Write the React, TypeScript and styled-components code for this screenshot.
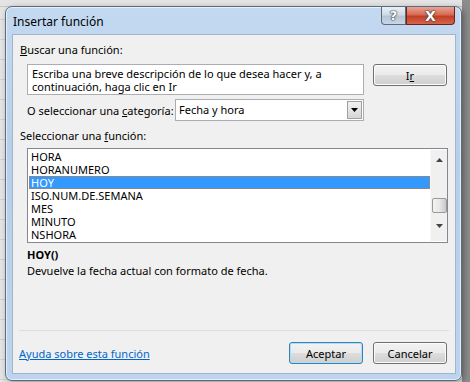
import React from 'react';
import styled, { createGlobalStyle } from 'styled-components';

const GlobalStyle = createGlobalStyle`
  html, body {
    margin: 0;
    padding: 0;
    width: 470px;
    height: 382px;
    overflow: hidden;
  }
  body {
    background:
      linear-gradient(#c9c9c9, #c9c9c9) 0 6px / 100% 1px no-repeat,
      repeating-linear-gradient(#e4e4e4 0, #e4e4e4 19px, #d0d0d0 19px, #d0d0d0 20px);
    font-family: "Noto Sans", "Open Sans", sans-serif;
  }
`;

//Styled Component
const Desktop = styled.div`
  width: 470px;
  height: 382px;
  padding: 6px 8px 0 5px;
  box-sizing: border-box;
  background: linear-gradient(90deg, transparent 0, transparent 462px, #8c8c8c 462px);
`;

const Window = styled.div`
  width: 457px;
  height: 375px;
  box-sizing: border-box;
  border: 1px solid #5b6b7c;
  border-radius: 7px;
  background: linear-gradient(180deg, #c3d9f1 0%, #b6cfea 40%, #bcd4ee 100%);
  box-shadow: inset 0 0 0 1px rgba(255, 255, 255, 0.6), 2px 2px 6px rgba(0, 0, 0, 0.35);
  display: flex;
  flex-direction: column;
  padding: 0 5px 6px 6px;
`;

const TitleBar = styled.div`
  height: 27px;
  display: flex;
  align-items: flex-start;
  justify-content: space-between;
`;

const Title = styled.h1`
  margin: 7px 0 0 1px;
  font-family: "Noto Sans", "Open Sans", sans-serif;
  font-size: 12px;
  font-weight: normal;
  color: #000;
  line-height: 15px;
`;

const Caption = styled.div`
  display: flex;
  margin-right: 1px;
`;

const CaptionButton = styled.div<{ $close?: boolean }>`
  height: 18px;
  width: ${p => (p.$close ? '49px' : '25px')};
  box-sizing: border-box;
  border: 1px solid ${p => (p.$close ? '#6d2418' : '#5d6a78')};
  border-top: none;
  border-radius: ${p => (p.$close ? '0 0 4px 0' : '0 0 0 4px')};
  background: ${p =>
    p.$close
      ? 'linear-gradient(180deg, #e8a493 0%, #d66b55 45%, #c23f26 55%, #d4664c 100%)'
      : 'linear-gradient(180deg, #e9eff6 0%, #cfdbe8 45%, #b5c5d6 55%, #c9d6e4 100%)'};
  display: flex;
  align-items: center;
  justify-content: center;
  color: #fff;
  font-family: "DejaVu Sans", sans-serif;
  font-weight: bold;
  font-size: ${p => (p.$close ? '14px' : '13px')};
  text-shadow: 0 0 1px #333, 0 0 1px #333, 0 0 2px #444;
`;

const Client = styled.div`
  flex: 1;
  background: #f0f0f0;
  border: 1px solid #a2b5c9;
  padding: 0 6px;
  display: flex;
  flex-direction: column;
  font-size: 11px;
  color: #000;
`;

const SectionLabel = styled.div<{ $top: number }>`
  margin-top: ${p => p.$top}px;
  padding-left: 1px;
  height: 15px;
  line-height: 15px;
`;

const Key = styled.span`
  text-decoration: underline;
`;

const SearchRow = styled.div`
  display: flex;
  margin-top: 7px;
  padding-left: 8px;
  gap: 9px;
  align-items: flex-start;
`;

const SearchBox = styled.div`
  width: 337px;
  height: 31px;
  box-sizing: border-box;
  background: #fff;
  border: 1px solid #abadb3;
  padding: 2px 4px;
  line-height: 13px;
`;

const Button = styled.div<{ $default?: boolean }>`
  width: 74px;
  height: 22px;
  box-sizing: border-box;
  border: 1px solid ${p => (p.$default ? '#3c7fb1' : '#707070')};
  border-radius: 3px;
  background: linear-gradient(180deg, #f2f2f2 0%, #ebebeb 50%, #dddddd 51%, #cfcfcf 100%);
  box-shadow: ${p => (p.$default ? 'inset 0 0 0 1px #a8e0f8' : 'inset 0 0 0 1px #fcfcfc')};
  display: flex;
  align-items: center;
  justify-content: center;
  line-height: 15px;
`;

const CategoryRow = styled.div`
  display: flex;
  align-items: center;
  margin-top: 4px;
  padding-left: 8px;
  height: 22px;
`;

const CategoryLabel = styled.span`
  width: 148px;
  white-space: nowrap;
`;

const Select = styled.div`
  width: 189px;
  height: 22px;
  box-sizing: border-box;
  background: #fff;
  border: 1px solid #abadb3;
  display: flex;
  align-items: stretch;
`;

const SelectValue = styled.span`
  flex: 1;
  padding-left: 3px;
  line-height: 19px;
`;

const DropButton = styled.span`
  width: 15px;
  margin: 1px;
  box-sizing: border-box;
  border: 1px solid #a0a0a0;
  background: linear-gradient(180deg, #f2f2f2, #d6d6d6);
  display: flex;
  align-items: center;
  justify-content: center;
`;

const ListBox = styled.div`
  margin: 5px 0 0 8px;
  width: 421px;
  height: 95px;
  box-sizing: border-box;
  background: #fff;
  border: 1px solid #828790;
  display: flex;
  padding: 1px 0 1px 1px;
`;

const Items = styled.div`
  flex: 1;
`;

const Item = styled.div<{ $selected?: boolean }>`
  height: 13px;
  line-height: 13px;
  box-sizing: border-box;
  padding-left: 2px;
  background: ${p => (p.$selected ? '#3399ff' : 'transparent')};
  color: ${p => (p.$selected ? '#fff' : '#000')};
  outline: ${p => (p.$selected ? '1px dotted #d97a1b' : 'none')};
  outline-offset: -1px;
  white-space: nowrap;
`;

const ScrollBar = styled.div`
  width: 17px;
  background: #f0f0f0;
  border-left: 1px solid #f6f6f6;
  display: flex;
  flex-direction: column;
  align-items: center;
  box-sizing: border-box;
  padding-top: 8px;
`;

const Thumb = styled.div`
  width: 15px;
  height: 15px;
  margin-top: 36px;
  box-sizing: border-box;
  border: 1px solid #9a9a9a;
  border-radius: 2px;
  background: linear-gradient(90deg, #f3f3f3 0%, #e8e8e8 50%, #c9c9c9 100%);
`;

const Arrow = styled.svg<{ $gap?: number }>`
  margin-top: ${p => p.$gap ?? 0}px;
  display: block;
`;

const FuncName = styled.div`
  margin: 4px 0 0 8px;
  font-weight: bold;
  height: 15px;
  line-height: 15px;
`;

const FuncDesc = styled.div`
  margin: 1px 0 0 8px;
  line-height: 15px;
`;

const Separator = styled.div`
  margin: auto 0 0 0;
  height: 1px;
  background: #d5dfe5;
`;

const Footer = styled.div`
  display: flex;
  align-items: center;
  margin: 11px 2px 9px 0;
  gap: 10px;
`;

const HelpLink = styled.a`
  color: #0066cc;
  text-decoration: underline;
  margin-right: auto;
  cursor: pointer;
`;

const functions = ['HORA', 'HORANUMERO', 'HOY', 'ISO.NUM.DE.SEMANA', 'MES', 'MINUTO', 'NSHORA'];

const App: React.FC = () => {
  return (
    <>
      <GlobalStyle />
      <Desktop>
        <Window>
          <TitleBar>
            <Title>Insertar función</Title>
            <Caption>
              <CaptionButton>?</CaptionButton>
              <CaptionButton $close>X</CaptionButton>
            </Caption>
          </TitleBar>
          <Client>
            <SectionLabel $top={7}><Key>B</Key>uscar una función:</SectionLabel>
            <SearchRow>
              <SearchBox>Escriba una breve descripción de lo que desea hacer y, a continuación, haga clic en Ir</SearchBox>
              <Button>I<Key>r</Key></Button>
            </SearchRow>
            <CategoryRow>
              <CategoryLabel>O seleccionar una <Key>c</Key>ategoría:</CategoryLabel>
              <Select>
                <SelectValue>Fecha y hora</SelectValue>
                <DropButton>
                  <svg width="7" height="4" viewBox="0 0 7 4"><path d="M0 0h7L3.5 4z" fill="#000" /></svg>
                </DropButton>
              </Select>
            </CategoryRow>
            <SectionLabel $top={7}>Seleccionar una <Key>f</Key>unción:</SectionLabel>
            <ListBox>
              <Items>
                {functions.map(f => (
                  <Item key={f} $selected={f === 'HOY'}>{f}</Item>
                ))}
              </Items>
              <ScrollBar>
                <Arrow width="7" height="4" viewBox="0 0 7 4"><path d="M3.5 0L7 4H0z" fill="#444" /></Arrow>
                <Thumb />
                <Arrow $gap={11} width="7" height="4" viewBox="0 0 7 4"><path d="M0 0h7L3.5 4z" fill="#444" /></Arrow>
              </ScrollBar>
            </ListBox>
            <FuncName>HOY()</FuncName>
            <FuncDesc>Devuelve la fecha actual con formato de fecha.</FuncDesc>
            <Separator />
            <Footer>
              <HelpLink>Ayuda sobre esta función</HelpLink>
              <Button $default>Aceptar</Button>
              <Button>Cancelar</Button>
            </Footer>
          </Client>
        </Window>
      </Desktop>
    </>
  );
};

export default App;
